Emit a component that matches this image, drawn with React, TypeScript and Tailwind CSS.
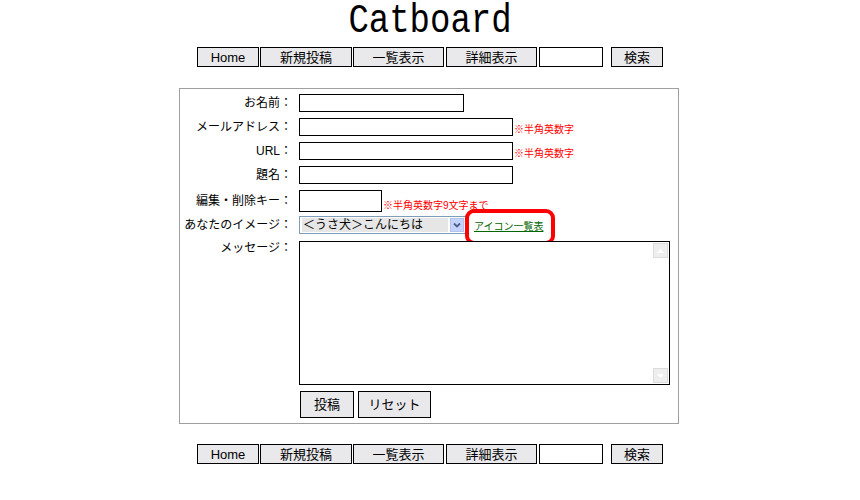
import React from 'react';

const jp = { fontFamily: '"Liberation Sans", "Noto Sans CJK JP", sans-serif' };

function NavBar() {
  return (
    <div className="flex items-center justify-center text-[13px] text-black" style={jp}>
      <button className="w-[62px] h-[20px] border border-black bg-[#e9e9ec] leading-none">Home</button>
      <button className="ml-[1px] w-[92px] h-[20px] border border-black bg-[#e9e9ec] leading-none">新規投稿</button>
      <button className="ml-[1px] w-[91px] h-[20px] border border-black bg-[#e9e9ec] leading-none">一覧表示</button>
      <button className="ml-[2px] w-[91px] h-[20px] border border-black bg-[#e9e9ec] leading-none">詳細表示</button>
      <input className="ml-[2px] w-[64px] h-[20px] border border-black bg-white" />
      <button className="ml-[8px] w-[52px] h-[20px] border border-black bg-[#e9e9ec] leading-none">検索</button>
    </div>
  );
}

function Note({ children }: { children: React.ReactNode }) {
  return <span className="ml-[1px] text-[10px] leading-none text-[#ff0000] pb-[1px]">{children}</span>;
}

function Label({ children }: { children: React.ReactNode }) {
  return <div className="w-[113px] shrink-0 text-right text-[12px] leading-none pr-[1px]">{children}</div>;
}

export default function App() {
  return (
    <div className="w-[860px] h-[500px] bg-white text-black" style={jp}>
      {/* title */}
      <div className="h-[44px] pt-[4px] flex justify-center">
        <h1
          className="text-[40px] leading-[36px] font-normal scale-x-[0.85]"
          style={{ fontFamily: '"Liberation Mono", monospace' }}
        >
          Catboard
        </h1>
      </div>

      <div className="mt-[3px]">
        <NavBar />
      </div>

      {/* post form */}
      <div className="mt-[21px] ml-[179px] w-[500px] border border-[#a0a0a0] pt-[5px] pb-[5px]">
        <div className="flex items-center h-[18px]">
          <Label>お名前：</Label>
          <input className="ml-[6px] w-[165px] h-[18px] border border-black" />
        </div>

        <div className="mt-[6px] flex items-center h-[18px]">
          <Label>メールアドレス：</Label>
          <div className="ml-[6px] flex items-end">
            <input className="w-[214px] h-[18px] border border-black" />
            <Note>※半角英数字</Note>
          </div>
        </div>

        <div className="mt-[6px] flex items-center h-[18px]">
          <Label>URL：</Label>
          <div className="ml-[6px] flex items-end">
            <input className="w-[214px] h-[18px] border border-black" />
            <Note>※半角英数字</Note>
          </div>
        </div>

        <div className="mt-[6px] flex items-center h-[18px]">
          <Label>題名：</Label>
          <input className="ml-[6px] w-[214px] h-[18px] border border-black" />
        </div>

        <div className="mt-[6px] flex items-center h-[22px]">
          <Label>編集・削除キー：</Label>
          <div className="ml-[6px] flex items-end">
            <input className="w-[83px] h-[22px] border border-black" />
            <Note>※半角英数字9文字まで</Note>
          </div>
        </div>

        <div className="mt-[4px] flex items-center h-[18px]">
          <Label>あなたのイメージ：</Label>
          <div className="ml-[6px] w-[167px] h-[18px] border border-[#7f9db9] flex items-center pl-[2px] pr-[1px] bg-white">
            <span className="flex-1 h-[14px] bg-[#e6e6e6] text-[12px] leading-[14px] pl-[1px]">＜うさ犬＞こんにちは</span>
            <span className="ml-[2px] w-[14px] h-[14px] bg-[#c3d3fd] border border-[#b0c4ee] flex items-center justify-center">
              <svg width="8" height="6" viewBox="0 0 8 6">
                <path d="M1 1.5 L4 4.5 L7 1.5" stroke="#4d6185" strokeWidth="1.8" fill="none" />
              </svg>
            </span>
          </div>
          <div className="relative ml-[8px] mt-[4px] h-[12px] flex items-center">
            <a href="#" className="text-[10px] leading-[12px] text-[#006600] underline">アイコン一覧表</a>
            <span className="absolute left-[-9px] right-[-11px] top-[-12px] bottom-[-12px] border-[4px] border-[#ff0000] rounded-[9px]" />
          </div>
        </div>

        <div className="mt-[7px] flex items-start">
          <div className="pt-[1px]">
            <Label>メッセージ：</Label>
          </div>
          <div className="ml-[6px] relative w-[371px] h-[144px] border border-black bg-white">
            <span className="absolute right-[1px] top-[1px] w-[15px] h-[15px] bg-[#eeeeee] border border-[#dcdcdc] flex items-center justify-center">
              <svg width="7" height="4" viewBox="0 0 7 4"><path d="M0 4 L3.5 0 L7 4Z" fill="#ffffff" /></svg>
            </span>
            <span className="absolute right-[1px] bottom-[1px] w-[15px] h-[15px] bg-[#eeeeee] border border-[#dcdcdc] flex items-center justify-center">
              <svg width="7" height="4" viewBox="0 0 7 4"><path d="M0 0 L3.5 4 L7 0Z" fill="#ffffff" /></svg>
            </span>
          </div>
        </div>

        <div className="mt-[6px] flex items-center">
          <div className="w-[113px] shrink-0" />
          <button className="ml-[7px] w-[54px] h-[27px] border border-black bg-[#e9e9ec] text-[13px] leading-none">投稿</button>
          <button className="ml-[4px] w-[73px] h-[27px] border border-black bg-[#e9e9ec] text-[13px] leading-none">リセット</button>
        </div>
      </div>

      <div className="mt-[20px]">
        <NavBar />
      </div>
    </div>
  );
}
